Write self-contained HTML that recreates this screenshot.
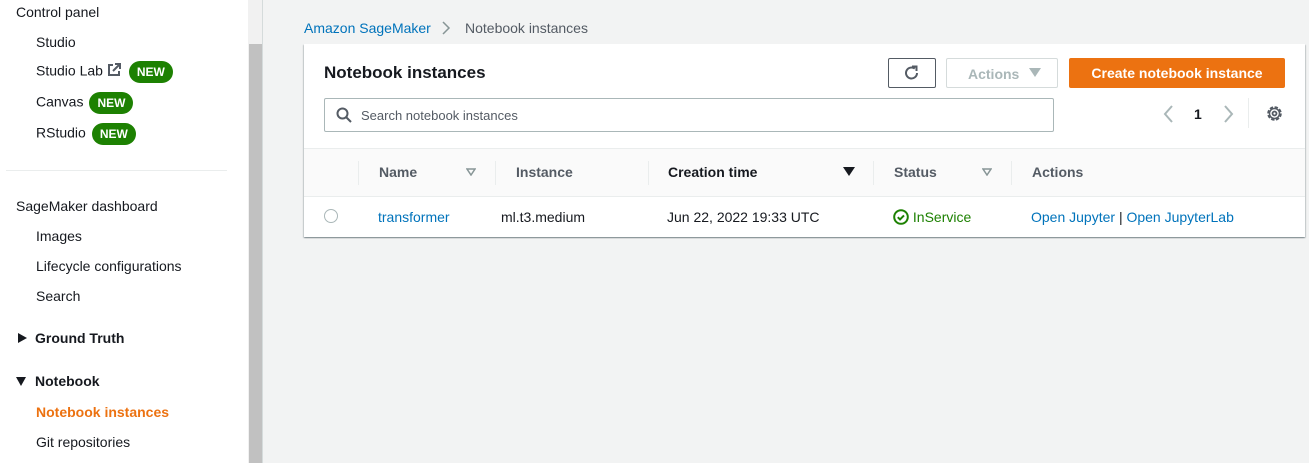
<!DOCTYPE html>
<html><head><style>
*{margin:0;padding:0;box-sizing:border-box}
body{width:1309px;height:463px;overflow:hidden;background:#f2f3f3;font-family:"Liberation Sans",sans-serif;font-size:14px;color:#16191f;position:relative}
.a{position:absolute;white-space:nowrap}
.side{position:absolute;left:0;top:0;width:248px;height:463px;background:#fff}
.sb{position:absolute;left:248px;top:0;width:15px;height:463px;background:#f1f1f1;border-right:1px solid #d5dbdb}
.thumb{position:absolute;left:249px;top:44px;width:13px;height:419px;background:#c1c1c1}
.new{display:inline-block;background:#1d8102;color:#fff;font-weight:bold;font-size:12px;border-radius:12px;padding:4px 8px;line-height:14px;margin-left:6px;vertical-align:middle}
.b{font-weight:bold}
.link{color:#0073bb}
.card{position:absolute;left:304px;top:44px;width:1001px;height:193px;background:#fff;box-shadow:0 1px 1px rgba(0,28,36,.3),1px 1px 1px rgba(0,28,36,.15),-1px 1px 1px rgba(0,28,36,.15)}
.sep{position:absolute;width:1px;height:24px;background:#eaeded;top:161px}
</style></head><body>
<div class="side"></div>
<div class="sb"></div><div class="thumb"></div>
<div class="a" style="left:16px;top:4px">Control panel</div>
<div class="a" style="left:36px;top:34px">Studio</div>
<div class="a" style="left:36px;top:61px">Studio Lab <svg width="14" height="14" viewBox="0 0 14 14" style="vertical-align:-1px"><path d="M6 2H2v10h10V8" fill="none" stroke="#545b64" stroke-width="2"/><path d="M8 1h5v5M13 1L6 8" fill="none" stroke="#545b64" stroke-width="2"/></svg><span class="new" style="margin-left:8px">NEW</span></div>
<div class="a" style="left:36px;top:92px">Canvas<span class="new">NEW</span></div>
<div class="a" style="left:36px;top:123px">RStudio<span class="new">NEW</span></div>
<div class="a" style="left:6px;top:170px;width:221px;height:1px;background:#eaeded"></div>
<div class="a" style="left:16px;top:198px">SageMaker dashboard</div>
<div class="a" style="left:36px;top:228px">Images</div>
<div class="a" style="left:36px;top:258px">Lifecycle configurations</div>
<div class="a" style="left:36px;top:288px">Search</div>
<svg class="a" style="left:18px;top:333px" width="9" height="10" viewBox="0 0 9 10"><path d="M0 0l9 5-9 5z" fill="#16191f"/></svg>
<div class="a b" style="left:35px;top:330px">Ground Truth</div>
<svg class="a" style="left:16px;top:377px" width="10" height="9" viewBox="0 0 10 9"><path d="M0 0h10l-5 9z" fill="#16191f"/></svg>
<div class="a b" style="left:35px;top:373px">Notebook</div>
<div class="a b" style="left:36px;top:404px;color:#ec7211">Notebook instances</div>
<div class="a" style="left:36px;top:434px">Git repositories</div>

<div class="a" style="left:304px;top:20px;color:#0073bb">Amazon SageMaker</div>
<svg class="a" style="left:441px;top:21px" width="10" height="14" viewBox="0 0 10 14"><path d="M2 1l6 6-6 6" fill="none" stroke="#879596" stroke-width="1.5"/></svg>
<div class="a" style="left:465px;top:20px;color:#545b64">Notebook instances</div>

<div class="card"></div>
<div class="a b" style="left:324px;top:63px;font-size:17px">Notebook instances</div>
<div class="a" style="left:888px;top:58px;width:48px;height:30px;border:1px solid #545b64;border-radius:2px"><svg width="20" height="20" viewBox="0 0 20 20" style="position:absolute;left:13px;top:4px"><path d="M15 10a5.5 5.5 0 1 1-2.2-4.4" fill="none" stroke="#545b64" stroke-width="2"/><path d="M10 3.5h4.5V8" fill="none" stroke="#545b64" stroke-width="2"/></svg></div>
<div class="a b" style="left:946px;top:58px;width:112px;height:30px;border:1px solid #d5dbdb;border-radius:2px;color:#aab7b8;padding:7px 0 0 21px">Actions</div>
<svg class="a" style="left:1029px;top:68px" width="12" height="9" viewBox="0 0 12 9"><path d="M0 0h12l-6 9z" fill="#aab7b8"/></svg>
<div class="a b" style="left:1069px;top:58px;width:216px;height:30px;background:#ec7211;border-radius:2px;color:#fff;text-align:center;line-height:30px">Create notebook instance</div>

<div class="a" style="left:324px;top:98px;width:730px;height:34px;border:1px solid #aab7b8;border-radius:2px"><svg width="16" height="16" viewBox="0 0 16 16" style="position:absolute;left:11px;top:8px"><circle cx="6.5" cy="6.5" r="5" fill="none" stroke="#545b64" stroke-width="2"/><path d="M10 10l5 5" stroke="#545b64" stroke-width="2"/></svg><span class="a" style="left:36px;top:9px;font-size:13px;color:#545b64">Search notebook instances</span></div>
<svg class="a" style="left:1163px;top:105px" width="12" height="18" viewBox="0 0 12 18"><path d="M9 1L2 9l7 8" fill="none" stroke="#aab7b8" stroke-width="2"/></svg>
<div class="a b" style="left:1194px;top:106px">1</div>
<svg class="a" style="left:1222px;top:105px" width="12" height="18" viewBox="0 0 12 18"><path d="M3 1l7 8-7 8" fill="none" stroke="#aab7b8" stroke-width="2"/></svg>
<div class="a" style="left:1248px;top:98px;width:1px;height:30px;background:#eaeded"></div>
<svg class="a" style="left:1265px;top:104px" width="19" height="19" viewBox="0 0 19 19"><circle cx="9.5" cy="9.5" r="6" fill="none" stroke="#545b64" stroke-width="2.6" stroke-dasharray="3.2 1.5"/><circle cx="9.5" cy="9.5" r="5" fill="none" stroke="#545b64" stroke-width="1.5"/><circle cx="9.5" cy="9.5" r="2" fill="none" stroke="#545b64" stroke-width="1.8"/></svg>

<div class="a" style="left:304px;top:148px;width:1001px;height:49px;background:#fafafa;border-top:1px solid #eaeded;border-bottom:1px solid #eaeded"></div>
<div class="sep" style="left:358px"></div><div class="sep" style="left:495px"></div><div class="sep" style="left:648px"></div><div class="sep" style="left:873px"></div><div class="sep" style="left:1011px"></div>
<div class="a b" style="left:379px;top:164px;color:#545b64">Name</div>
<svg class="a" style="left:466px;top:168px" width="10" height="8" viewBox="0 0 10 8"><path d="M1 1h8l-4 6z" fill="none" stroke="#879596" stroke-width="1.5"/></svg>
<div class="a b" style="left:516px;top:164px;color:#545b64">Instance</div>
<div class="a b" style="left:668px;top:164px">Creation time</div>
<svg class="a" style="left:843px;top:167px" width="12" height="9" viewBox="0 0 12 9"><path d="M0 0h12l-6 9z" fill="#16191f"/></svg>
<div class="a b" style="left:894px;top:164px;color:#545b64">Status</div>
<svg class="a" style="left:982px;top:168px" width="10" height="8" viewBox="0 0 10 8"><path d="M1 1h8l-4 6z" fill="none" stroke="#879596" stroke-width="1.5"/></svg>
<div class="a b" style="left:1032px;top:164px;color:#545b64">Actions</div>

<div class="a" style="left:324px;top:209px;width:14px;height:14px;border:1px solid #aab7b8;border-radius:50%"></div>
<div class="a link" style="left:378px;top:209px">transformer</div>
<div class="a" style="left:501px;top:209px">ml.t3.medium</div>
<div class="a" style="left:667px;top:209px">Jun 22, 2022 19:33 UTC</div>
<div class="a" style="left:893px;top:209px;color:#1d8102"><svg width="16" height="16" viewBox="0 0 16 16" style="vertical-align:-3px"><circle cx="8" cy="8" r="6.8" fill="none" stroke="#1d8102" stroke-width="2"/><path d="M4.8 8.2l2.2 2.2 4-4" fill="none" stroke="#1d8102" stroke-width="2"/></svg> InService</div>
<div class="a link" style="left:1031px;top:209px">Open Jupyter <span style="color:#16191f">|</span> Open JupyterLab</div>
</body></html>
